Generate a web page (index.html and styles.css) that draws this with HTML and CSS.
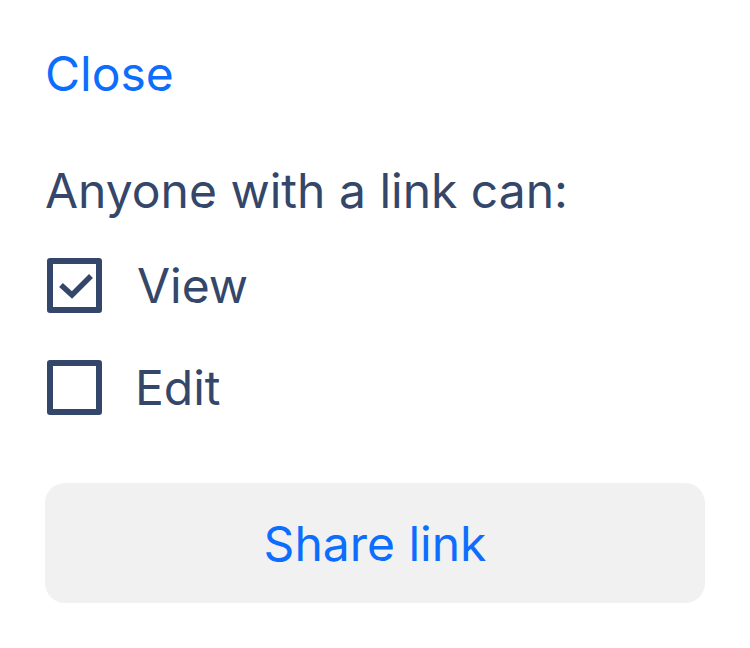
FILE: index.html
```html
<!DOCTYPE html>
<html lang="en">
<head>
<meta charset="utf-8">
<title>Share</title>
<link rel="stylesheet" href="styles.css">
</head>
<body>
<div class="panel">
  <a class="close" href="#">Close</a>
  <p class="heading">Anyone with a link can:</p>
  <ul class="options">
    <li class="option">
      <span class="box checked">
        <svg viewBox="0 0 55 55" width="55" height="55" aria-hidden="true"><path d="M14 27 L25 37 L44 18" fill="none" stroke="#34476a" stroke-width="5.5"/></svg>
      </span>
      <span class="option-label view">View</span>
    </li>
    <li class="option">
      <span class="box"></span>
      <span class="option-label">Edit</span>
    </li>
  </ul>
  <button class="share" type="button">Share link</button>
</div>
</body>
</html>
```
FILE: styles.css
```css
html, body {
  margin: 0;
  padding: 0;
  background: #ffffff;
}
body {
  font-family: Inter, "Noto Sans", sans-serif;
  color: #34476a;
}
.panel {
  display: flex;
  flex-direction: column;
  align-items: flex-start;
  padding: 46px 45px 0 45px;
}
.close {
  font-size: 48px;
  line-height: 56px;
  color: #0d6efd;
  text-decoration: none;
  margin-left: 0;
}
.heading {
  margin: 61px 0 0 0;
  font-size: 48px;
  line-height: 56px;
}
.options {
  list-style: none;
  margin: 38px 0 0 0;
  padding: 0;
  display: flex;
  flex-direction: column;
  gap: 46px;
}
.option {
  display: flex;
  align-items: center;
  height: 56px;
  gap: 33px;
}
.box {
  box-sizing: border-box;
  width: 55px;
  height: 55px;
  border: 6px solid #34476a;
  border-radius: 3px;
  margin-left: 2px;
  position: relative;
}
.box svg {
  position: absolute;
  left: -6px;
  top: -6px;
}
.option-label {
  font-size: 48px;
  line-height: 56px;
  position: relative;
  top: 1px;
}
.option-label.view {
  margin-left: 2px;
}
.share {
  margin-top: 68px;
  width: 660px;
  height: 120px;
  border: none;
  border-radius: 20px;
  background: #f1f1f1;
  color: #0d6efd;
  font-family: Inter, "Noto Sans", sans-serif;
  font-size: 48px;
  padding: 0;
  cursor: pointer;
}
```
